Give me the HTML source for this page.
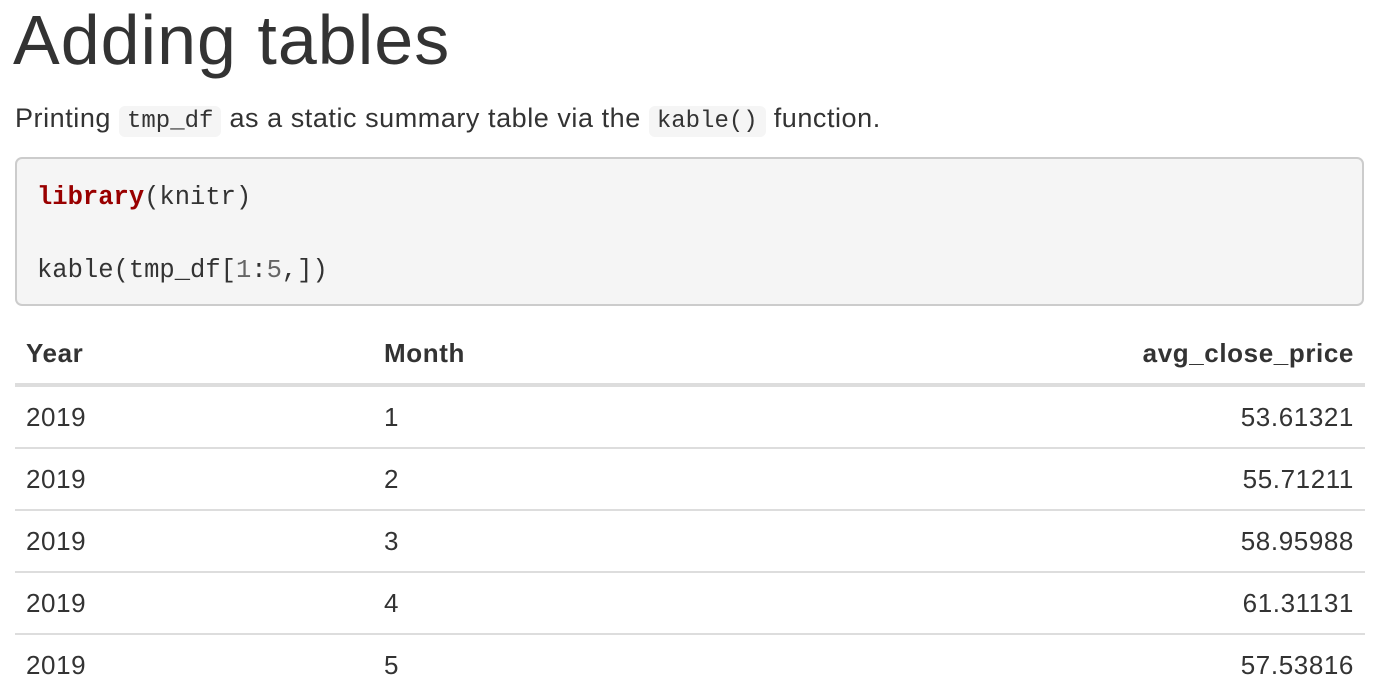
<!DOCTYPE html>
<html><head><meta charset="utf-8"><style>
body{margin:0;background:#fff;color:#333;font-family:"Liberation Sans",sans-serif;width:1381px;height:699px;overflow:hidden}
h1{position:absolute;left:13px;top:-2px;margin:0;font-size:70px;font-weight:500;line-height:84px;letter-spacing:1px}
p{position:absolute;left:15px;top:98px;margin:0;font-size:27px;line-height:40px;letter-spacing:0.55px}
p code{font-family:"Liberation Mono",monospace;font-size:24px;background:#f5f5f5;border-radius:6px;padding:2px 8px;letter-spacing:0}
pre{position:absolute;left:15px;top:157px;width:1345px;height:145px;margin:0;background:#f5f5f5;border:2px solid #ccc;border-radius:7px;box-sizing:content-box}
pre div{position:absolute;left:20px;font-family:"Liberation Mono",monospace;font-size:25.5px;color:#333;white-space:pre}
.k{color:#990000;font-weight:bold}.n{color:#666}
table{position:absolute;left:15px;top:323px;width:1350px;border-collapse:collapse;font-size:26px;letter-spacing:0.6px}
th{font-weight:bold;text-align:left;height:60px;padding:0 11px;border-bottom:4px solid #ddd}
td{height:60px;padding:0 11px;border-bottom:2px solid #ddd}
tr:last-child td{border-bottom:none}
.r{text-align:right}
</style></head><body>
<h1>Adding tables</h1>
<p>Printing <code>tmp_df</code> as a static summary table via the <code>kable()</code> function.</p>
<pre><div style="top:24px"><span class="k">library</span>(knitr)</div><div style="top:97px">kable(tmp_df[<span class="n">1</span>:<span class="n">5</span>,])</div></pre>
<table>
<tr><th style="width:336px">Year</th><th>Month</th><th class="r">avg_close_price</th></tr>
<tr><td>2019</td><td>1</td><td class="r">53.61321</td></tr>
<tr><td>2019</td><td>2</td><td class="r">55.71211</td></tr>
<tr><td>2019</td><td>3</td><td class="r">58.95988</td></tr>
<tr><td>2019</td><td>4</td><td class="r">61.31131</td></tr>
<tr><td>2019</td><td>5</td><td class="r">57.53816</td></tr>
</table>
</body></html>
